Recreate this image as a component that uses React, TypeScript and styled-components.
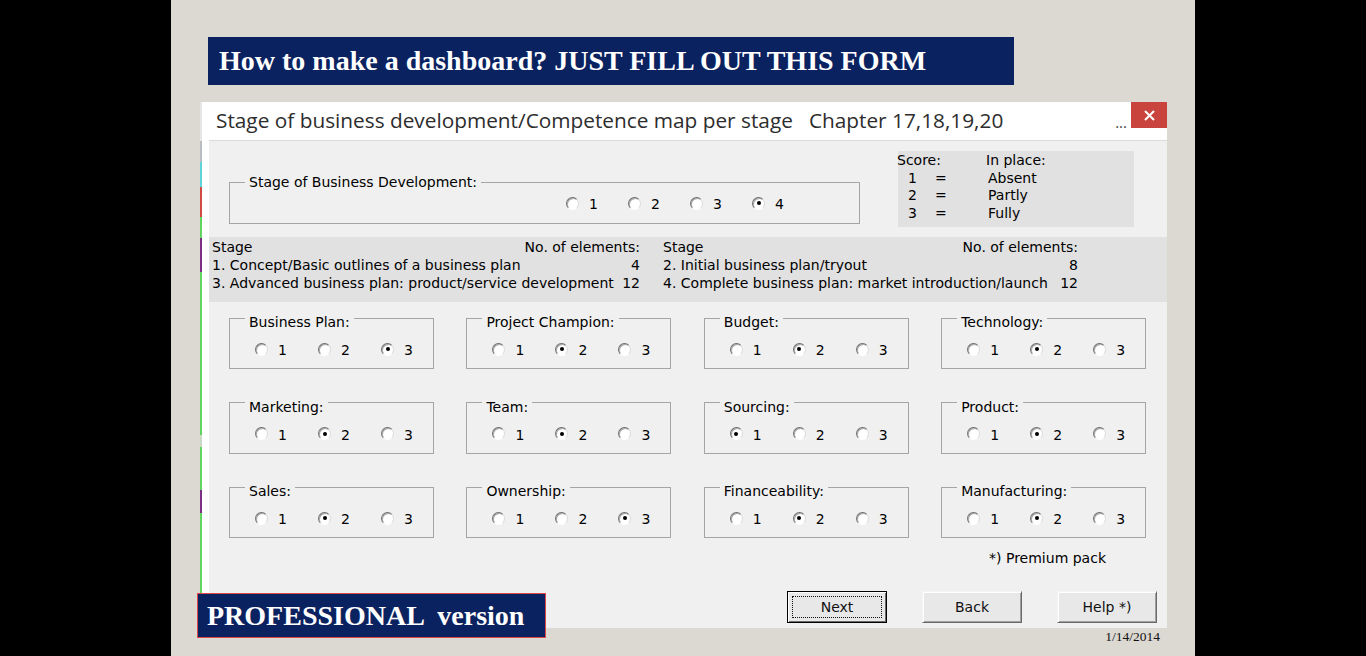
import React from 'react';
import styled, { createGlobalStyle } from 'styled-components';

const Global = createGlobalStyle`
  html, body { margin: 0; padding: 0; background: #000; }
  body { width: 1366px; height: 656px; overflow: hidden; }
`;

const Slide = styled.div`
  position: relative;
  width: 1024px;
  height: 656px;
  margin: 0 auto;
  background: #dcd8d2;
  display: flex;
  flex-direction: column;
`;

const Banner = styled.div`
  margin: 37px 0 0 37px;
  width: 806px;
  height: 48px;
  box-sizing: border-box;
  padding-left: 11px;
  background: #0b2260;
  color: #fff;
  font-family: "Liberation Serif", serif;
  font-weight: bold;
  font-size: 28px;
  display: flex;
  align-items: center;
  white-space: nowrap;
`;

const Dialog = styled.div`
  margin: 17px 0 0 29px;
  width: 967px;
  height: 526px;
  box-sizing: border-box;
  background: #fff;
  border-left: 2px solid transparent;
  border-image: linear-gradient(
      to bottom,
      #e6e6e6 0px, #e6e6e6 40px,
      #b9bdc2 40px, #b9bdc2 61px,
      #5fd3dc 61px, #5fd3dc 86px,
      #d24a44 86px, #d24a44 116px,
      #5fd45f 116px, #5fd45f 136px,
      #7c2e86 136px, #7c2e86 170px,
      #5fd45f 170px, #5fd45f 333px,
      #c9d9c4 333px, #c9d9c4 345px,
      #5fd45f 345px, #5fd45f 388px,
      #7c2e86 388px, #7c2e86 410px,
      #5fd45f 410px, #5fd45f 526px
    ) 1;
  display: flex;
  flex-direction: column;
  font-family: "DejaVu Sans", "Liberation Sans", sans-serif;
  font-size: 14px;
  color: #000;
`;

const TitleBar = styled.div`
  height: 38px;
  flex: none;
  display: flex;
  align-items: flex-start;
  padding-left: 14px;
  font-family: "Open Sans", "Noto Sans", sans-serif;
  font-size: 20.8px;
  color: #2d2d2d;
`;

const TitleText = styled.span`
  margin-top: 4px;
  white-space: nowrap;
`;

const Chapter = styled.span`
  margin-left: 16px;
`;

const Dots = styled.span`
  margin: 10px 4px 0 auto;
  font-size: 15px;
  color: #444;
`;

const CloseBtn = styled.div`
  width: 36px;
  height: 26px;
  background: #c9443c;
  display: flex;
  align-items: center;
  justify-content: center;
`;

const Body = styled.div`
  flex: 1;
  margin-left: 7px;
  background: #f0f0f0;
  border-top: 1px solid #dadada;
  display: flex;
  flex-direction: column;
`;

const TopSection = styled.div`
  height: 96px;
  flex: none;
  display: flex;
  align-items: flex-start;
  padding-left: 20px;
`;

const Group = styled.fieldset<{ $w: number }>`
  margin: 0;
  width: ${p => p.$w}px;
  box-sizing: border-box;
  padding: 0 0 12px 15px;
  border: 1px solid #a5a5a5;
  min-width: 0;
`;

const Legend = styled.legend<{ $drop?: number }>`
  padding: ${p => p.$drop ?? 8}px 4px 0;
  line-height: 16px;
`;

const StageGroup = styled(Group)`
  margin-top: 33px;
  padding-bottom: 13px;
`;

const RadioRow = styled.div<{ $top: number; $indent: number }>`
  display: flex;
  margin-top: ${p => p.$top}px;
  padding-left: ${p => p.$indent}px;
  height: 14px;
  align-items: center;
`;

const RadioItem = styled.div<{ $w: number }>`
  width: ${p => p.$w}px;
  display: flex;
  align-items: center;
  flex: none;
`;

const Circle = styled.span`
  width: 13px;
  height: 13px;
  box-sizing: border-box;
  border-radius: 50%;
  background: #fff;
  border: 1px solid;
  border-color: #6e6e6e #dadada #ffffff #6e6e6e;
  box-shadow: inset 1px 1px 0 #a8a8a8;
  display: flex;
  align-items: center;
  justify-content: center;
  flex: none;
`;

const Dot = styled.span`
  width: 4px;
  height: 4px;
  border-radius: 50%;
  background: #000;
`;

const RadioLabel = styled.span`
  margin-left: 10px;
  line-height: 14px;
  position: relative;
  top: 1px;
`;

const ScoreBox = styled.div`
  margin: 10px 0 0 38px;
  width: 236px;
  height: 76px;
  box-sizing: border-box;
  padding-top: 1px;
  background: #e1e1e1;
  line-height: 17.5px;
`;

const ScoreRow = styled.div`
  display: grid;
  grid-template-columns: 11px 27px 53px auto;
  margin-left: -1px;
`;

const ScoreHead = styled.span`
  grid-column: 1 / 4;
`;

const PlaceHead = styled.span`
  margin-left: -2px;
`;

const StageBand = styled.div`
  height: 65px;
  flex: none;
  box-sizing: border-box;
  padding: 1px 0 0 3px;
  background: #e1e1e1;
  display: flex;
  line-height: 18px;
  white-space: nowrap;
`;

const StageCol = styled.div<{ $w: number; $mr: number }>`
  width: ${p => p.$w}px;
  margin-right: ${p => p.$mr}px;
  display: flex;
  flex-direction: column;
`;

const StageLine = styled.div`
  display: flex;
  justify-content: space-between;
`;

const Grid = styled.div`
  margin-top: 4px;
  padding-left: 20px;
  display: grid;
  grid-template-columns: repeat(4, 205px);
  column-gap: 32.4px;
  row-gap: 21.5px;
`;

const Premium = styled.div`
  margin: 12px 61px 0 0;
  text-align: right;
  line-height: 17px;
`;

const ButtonRow = styled.div`
  margin-top: 24px;
  display: flex;
  justify-content: flex-end;
  gap: 35px;
  padding-right: 10px;
`;

const Button = styled.div<{ $focus?: boolean }>`
  position: relative;
  width: 100px;
  height: 32px;
  box-sizing: border-box;
  border: 1px solid;
  border-color: ${p => (p.$focus ? '#000' : '#f4f4f4 #6a6a6a #6a6a6a #f4f4f4')};
  box-shadow: ${p =>
    p.$focus
      ? 'inset 1px 1px 0 #fff, inset -1px -1px 0 #6a6a6a'
      : 'inset 1px 1px 0 #fff, inset -1px -1px 0 #a0a0a0'};
  background: #e8e8e8;
  display: flex;
  align-items: center;
  justify-content: center;
  font-size: 14px;
  color: #111;
  &::after {
    content: '';
    display: ${p => (p.$focus ? 'block' : 'none')};
    position: absolute;
    inset: 4px;
    border: 1px dotted #111;
  }
`;

const DateText = styled.div`
  margin: 1px 35px 0 0;
  text-align: right;
  font-family: "Liberation Serif", serif;
  font-size: 13.5px;
  color: #111;
`;

const ProBadge = styled.div`
  position: absolute;
  left: 26px;
  top: 593px;
  width: 349px;
  height: 45px;
  box-sizing: border-box;
  border: 1px solid #e04848;
  background: #0b2260;
  color: #fff;
  font-family: "Liberation Serif", serif;
  font-weight: bold;
  font-size: 28px;
  display: flex;
  align-items: center;
  padding-left: 9px;
  white-space: pre;
`;

type RadioProps = { n: number; on: boolean; w: number };
const Radio = ({ n, on, w }: RadioProps) => (
  <RadioItem $w={w}>
    <Circle>{on && <Dot />}</Circle>
    <RadioLabel>{n}</RadioLabel>
  </RadioItem>
);

const groups: [string, number][] = [
  ['Business Plan:', 3],
  ['Project Champion:', 2],
  ['Budget:', 2],
  ['Technology:', 2],
  ['Marketing:', 2],
  ['Team:', 2],
  ['Sourcing:', 1],
  ['Product:', 2],
  ['Sales:', 2],
  ['Ownership:', 3],
  ['Financeability:', 2],
  ['Manufacturing:', 2],
];

const stageLeft: [string, string][] = [
  ['Stage', 'No. of elements:'],
  ['1. Concept/Basic outlines of a business plan', '4'],
  ['3. Advanced business plan: product/service development', '12'],
];

const stageRight: [string, string][] = [
  ['Stage', 'No. of elements:'],
  ['2. Initial business plan/tryout', '8'],
  ['4. Complete business plan: market introduction/launch', '12'],
];

export default function App() {
  return (
    <>
      <Global />
      <Slide>
        <Banner>How to make a dashboard? JUST FILL OUT THIS FORM</Banner>
        <Dialog>
          <TitleBar>
            <TitleText>
              Stage of business development/Competence map per stage
              <Chapter>Chapter 17,18,19,20</Chapter>
            </TitleText>
            <Dots>...</Dots>
            <CloseBtn>
              <svg width="11" height="11" viewBox="0 0 11 11">
                <path d="M1 1 L10 10 M10 1 L1 10" stroke="#fff" strokeWidth="2" />
              </svg>
            </CloseBtn>
          </TitleBar>
          <Body>
            <TopSection>
              <StageGroup $w={631}>
                <Legend $drop={0}>Stage of Business Development:</Legend>
                <RadioRow $top={6} $indent={321}>
                  {[1, 2, 3, 4].map(n => (
                    <Radio key={n} n={n} on={n === 4} w={62} />
                  ))}
                </RadioRow>
              </StageGroup>
              <ScoreBox>
                <ScoreRow>
                  <ScoreHead>Score:</ScoreHead>
                  <PlaceHead>In place:</PlaceHead>
                </ScoreRow>
                {['Absent', 'Partly', 'Fully'].map((t, i) => (
                  <ScoreRow key={t}>
                    <span />
                    <span>{i + 1}</span>
                    <span>=</span>
                    <span>{t}</span>
                  </ScoreRow>
                ))}
              </ScoreBox>
            </TopSection>
            <StageBand>
              <StageCol $w={428} $mr={23}>
                {stageLeft.map(([a, b]) => (
                  <StageLine key={a}>
                    <span>{a}</span>
                    <span>{b}</span>
                  </StageLine>
                ))}
              </StageCol>
              <StageCol $w={415} $mr={0}>
                {stageRight.map(([a, b]) => (
                  <StageLine key={a}>
                    <span>{a}</span>
                    <span>{b}</span>
                  </StageLine>
                ))}
              </StageCol>
            </StageBand>
            <Grid>
              {groups.map(([label, sel]) => (
                <Group key={label} $w={205}>
                  <Legend>{label}</Legend>
                  <RadioRow $top={12} $indent={10}>
                    {[1, 2, 3].map(n => (
                      <Radio key={n} n={n} on={n === sel} w={63} />
                    ))}
                  </RadioRow>
                </Group>
              ))}
            </Grid>
            <Premium>*) Premium pack</Premium>
            <ButtonRow>
              <Button $focus>Next</Button>
              <Button>Back</Button>
              <Button>Help *)</Button>
            </ButtonRow>
          </Body>
        </Dialog>
        <DateText>1/14/2014</DateText>
        <ProBadge>PROFESSIONAL  version</ProBadge>
      </Slide>
    </>
  );
}
